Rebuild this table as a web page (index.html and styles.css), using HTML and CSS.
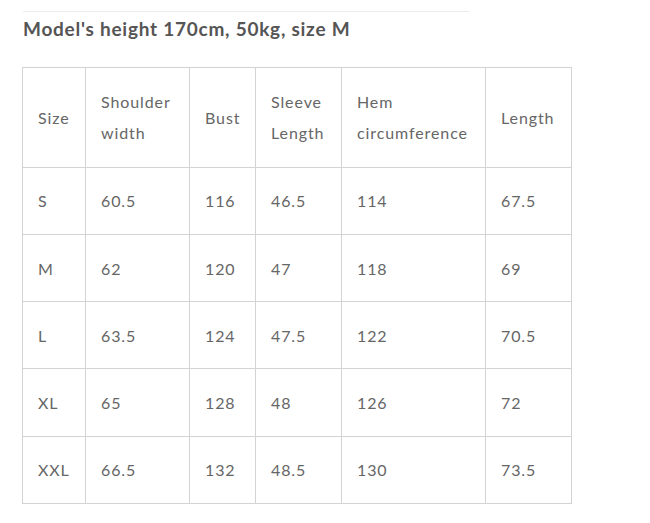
FILE: index.html
```html
<!DOCTYPE html>
<html>
<head>
<meta charset="utf-8">
<link rel="stylesheet" href="styles.css">
</head>
<body>
<div class="page">
  <div class="rule"></div>
  <h2 class="title">Model's height 170cm, 50kg, size M</h2>
  <table class="sizes">
    <colgroup>
      <col class="c1"><col class="c2"><col class="c3"><col class="c4"><col class="c5"><col class="c6">
    </colgroup>
    <tr class="head">
      <td>Size</td>
      <td>Shoulder<br>width</td>
      <td>Bust</td>
      <td>Sleeve<br>Length</td>
      <td>Hem<br>circumference</td>
      <td>Length</td>
    </tr>
    <tr><td>S</td><td>60.5</td><td>116</td><td>46.5</td><td>114</td><td>67.5</td></tr>
    <tr><td>M</td><td>62</td><td>120</td><td>47</td><td>118</td><td>69</td></tr>
    <tr><td>L</td><td>63.5</td><td>124</td><td>47.5</td><td>122</td><td>70.5</td></tr>
    <tr><td>XL</td><td>65</td><td>128</td><td>48</td><td>126</td><td>72</td></tr>
    <tr><td>XXL</td><td>66.5</td><td>132</td><td>48.5</td><td>130</td><td>73.5</td></tr>
  </table>
</div>
</body>
</html>
```
FILE: styles.css
```css
html, body {
  margin: 0;
  padding: 0;
  background: #fff;
}
.page {
  padding: 11px 0 0 22px;
  font-family: Lato, "Open Sans", sans-serif;
  color: #666;
}
.rule {
  width: 446px;
  height: 1px;
  background: #ececec;
  margin-left: 1px;
}
.title {
  margin: 3px 0 0 1px;
  font-size: 19px;
  line-height: 28px;
  font-weight: bold;
  color: #555;
  letter-spacing: 0.75px;
}
.sizes {
  margin-top: 24px;
  border-collapse: collapse;
  table-layout: fixed;
  width: 550px;
  font-size: 16px;
  line-height: 31px;
  letter-spacing: 0.9px;
}
.c1 { width: 63px; }
.c2 { width: 104px; }
.c3 { width: 66px; }
.c4 { width: 86px; }
.c5 { width: 144px; }
.c6 { width: 86px; }
.sizes td {
  border: 1px solid #d3d3d3;
  padding: 17.8px 15px 17.5px 15px;
  vertical-align: middle;
  text-align: left;
  white-space: nowrap;
}
.sizes .head td {
  padding-top: 18px;
  padding-bottom: 18.5px;
}
```
